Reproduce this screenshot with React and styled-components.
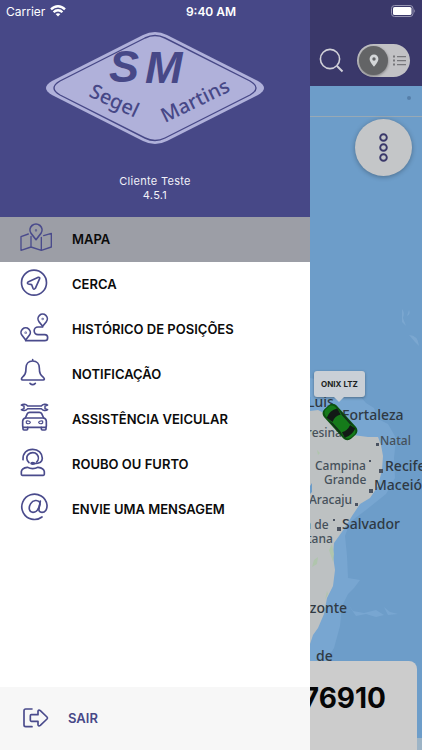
// src/App.jsx
import React, { useState } from "react";
import styled, { createGlobalStyle } from "styled-components";

const GlobalStyle = createGlobalStyle`
  * {
    box-sizing: border-box;
  }

  body {
    margin: 0;
    font-family: Inter, "Liberation Sans", sans-serif;
    background: #ffffff;
  }

  button {
    font: inherit;
    border: none;
    padding: 0;
    background: transparent;
    cursor: pointer;
  }
`;

const Screen = styled.div`
  position: relative;
  display: flex;
  min-height: 100vh;
  overflow: hidden;
`;

const StatusBar = styled.div`
  position: absolute;
  top: 0;
  left: 0;
  right: 0;
  z-index: 3;
  display: grid;
  grid-template-columns: 1fr auto 1fr;
  align-items: center;
  height: 22px;
  padding: 0 6px;
  color: #ffffff;
  font-size: 12px;
`;

const Carrier = styled.div`
  display: flex;
  align-items: center;
  gap: 5px;
`;

const Time = styled.div`
  font-weight: 600;
`;

const Battery = styled.svg`
  justify-self: end;
  width: 25px;
  height: 12px;
`;

const Drawer = styled.aside`
  position: relative;
  z-index: 2;
  display: flex;
  flex: 0 0 310px;
  flex-direction: column;
  background: #ffffff;
`;

const DrawerHeader = styled.header`
  display: flex;
  flex-direction: column;
  align-items: center;
  gap: 30px;
  padding: 32px 0 15px;
  background: #474887;
`;

const Logo = styled.svg`
  display: block;
  width: 218px;
  height: 112px;
`;

const Client = styled.div`
  color: #f1f1f8;
  font-size: 11px;
  line-height: 14px;
  letter-spacing: 0.3px;
  text-align: center;
`;

const Menu = styled.nav`
  display: flex;
  flex: 1;
  flex-direction: column;
`;

const MenuItem = styled.a`
  display: flex;
  align-items: center;
  gap: 20px;
  height: 45px;
  padding: 0 20px 2px;
  color: #0b0b0b;
  background: ${(props) => (props.$active ? "#9c9ea6" : "transparent")};
  font-size: 13px;
  font-weight: 600;
  text-decoration: none;
`;

const IconBox = styled.span`
  display: flex;
  padding-bottom: 2px;
`;

const LineIcon = styled.svg`
  display: block;
  width: 32px;
  height: 28px;
  fill: none;
  stroke: #4a4b8c;
  stroke-width: 5;
  stroke-linecap: round;
  stroke-linejoin: round;
  overflow: visible;
`;

const ExitButton = styled.button`
  && {
    display: flex;
    align-items: center;
    gap: 16px;
    height: 63px;
    padding: 0 20px 2px;
    color: #474887;
    background: #f7f7f7;
    font-size: 13px;
    font-weight: 600;
  }
`;

const Main = styled.main`
  display: flex;
  flex: 1;
  flex-direction: column;
  min-width: 0;
`;

const Toolbar = styled.div`
  display: flex;
  align-items: center;
  justify-content: space-between;
  height: 86px;
  padding: 34px 12px 0 9px;
  background: #3a386a;
`;

const SearchButton = styled.button`
  display: flex;
`;

const Toggle = styled.label`
  position: relative;
  display: grid;
  grid-template-columns: 1fr 1fr;
  align-items: center;
  width: 53px;
  height: 33px;
  padding: 2px;
  border-radius: 17px;
  background: #c2c2c5;
  cursor: pointer;
`;

const ToggleInput = styled.input`
  position: absolute;
  inset: 0;
  margin: 0;
  opacity: 0;
`;

const Knob = styled.span`
  display: flex;
  align-items: center;
  justify-content: center;
  width: 29px;
  height: 29px;
  border-radius: 50%;
  background: #636466;
  box-shadow: 0 1px 3px rgba(0, 0, 0, 0.4);
`;

const ListSide = styled.span`
  display: flex;
  justify-content: center;
  padding-left: 2px;
`;

const MapArea = styled.section`
  position: relative;
  display: flex;
  flex: 1;
  flex-direction: column;
  background: #6d9dc9;
  overflow: hidden;
`;

const MapCanvas = styled.svg`
  position: absolute;
  top: 0;
  left: 0;
  width: 100%;
  height: 100%;
`;

const Place = styled.span`
  position: absolute;
  left: ${(props) => props.$x}px;
  top: ${(props) => props.$y}px;
  color: ${(props) => (props.$big ? "#2f3943" : "#45505a")};
  font-family: "Noto Sans", "Open Sans", sans-serif;
  font-size: ${(props) => (props.$big ? 14 : 12)}px;
  font-weight: 500;
  line-height: 13px;
  white-space: nowrap;
`;

const Bubble = styled.div`
  position: absolute;
  left: 4px;
  top: 285px;
  width: 51px;
  padding: 8px 0;
  border-radius: 3px;
  color: #1c1f22;
  background: #c9cfd6;
  box-shadow: 0 1px 3px rgba(0, 0, 0, 0.35);
  font-size: 8px;
  font-weight: 700;
  line-height: 10px;
  text-align: center;

  &::after {
    content: "";
    position: absolute;
    left: 20px;
    top: 26px;
    border: 5px solid transparent;
    border-top-color: #c9cfd6;
    border-bottom: none;
  }
`;

const Car = styled.svg`
  position: absolute;
  left: 10px;
  top: 316px;
  width: 40px;
  height: 40px;
`;

const RoundButton = styled.button`
  && {
    position: relative;
    display: flex;
    align-items: center;
    justify-content: center;
    align-self: flex-end;
    width: 57px;
    height: 57px;
    margin: 33px 10px 0 0;
    border-radius: 50%;
    background: #c4c6c8;
    box-shadow: 0 1px 5px rgba(0, 0, 0, 0.3);
  }
`;

const VehicleCard = styled.div`
  position: relative;
  display: flex;
  justify-content: flex-end;
  height: 89px;
  margin: auto 5px 0 0;
  padding: 20px 31px 0 0;
  border-radius: 0 8px 0 0;
  background: #cccccc;
  color: #060606;
  font-size: 28px;
  font-weight: 700;
  line-height: 34px;
  white-space: nowrap;
`;

const icons = {
  map: (
    <>
      <path d="M48 47 L33 28 A18 18 0 1 1 63 28 Z" />
      <circle cx="48" cy="19" r="1" />
      <path d="M25 30 L3 38 V79 L33 69 L64 79 L94 69 V28 L71 35 M33 37 V69 M64 40 V79" strokeWidth="4" />
    </>
  ),
  fence: (
    <>
      <circle cx="42" cy="41" r="37.5" />
      <path d="M55 25 L24 39 Q20 43 25 45 L35 47 L39 58 Q42 63 46 58 L59 29 Q60 24 55 25 Z" />
    </>
  ),
  route: (
    <>
      <path d="M68 37 L57 23 A14 14 0 1 1 79 23 Z" />
      <circle cx="68" cy="15" r="1" />
      <path d="M17 78 L6 64 A14 14 0 1 1 28 64 Z" />
      <circle cx="17" cy="56" r="1" />
      <path d="M17 80 H74 A9 9 0 0 0 74 62 H54 A11 11 0 0 1 54 39 H68" />
    </>
  ),
  bell: (
    <>
      <path d="M38 2 V6 M38 6 C25 6 18 15 18 27 C18 45 14 48 6 56 Q2 62 8 63 H69 Q76 62 71 56 C62 48 58 45 58 27 C58 15 51 6 38 6 Z" />
      <path d="M30 73 Q38 81 46 73" />
    </>
  ),
  service: (
    <>
      <path
        d="M23 6 C19 0 9 -1 4 3 L12 6 V14 L4 17 C9 21 19 20 23 14 H64 C68 20 78 21 83 17 L75 14 V6 L83 3 C78 -1 68 0 64 6 Z"
        strokeWidth="4.5"
      />
      <path d="M16 42 L22 29 Q24 25 29 25 H58 Q63 25 65 29 L71 42" />
      <path d="M16 42 H71 Q79 44 79 52 V67 Q79 70 76 70 H11 Q8 70 8 67 V52 Q8 44 16 42 Z" />
      <path d="M9 70 V75 Q9 78 12 78 H20 Q23 78 23 75 V70 M64 70 V75 Q64 78 67 78 H75 Q78 78 78 75 V70" />
      <path d="M19 51 Q31 50 31 56 Q26 62 19 57 Z M68 51 Q56 50 56 56 Q61 62 68 57 Z" strokeWidth="3.5" />
    </>
  ),
  support: (
    <>
      <path d="M9 32 C8 12 20 1 38 1 C55 1 67 13 67 28 C67 38 57 44 42 44" />
      <path d="M27 41 C18 33 19 22 25 16 C32 9 45 9 51 16 C57 23 56 33 50 39" />
      <ellipse cx="38" cy="43" rx="5" ry="2.5" fill="#4a4b8c" />
      <path d="M4 76 V68 Q5 57 22 55 Q38 63 54 55 Q72 57 73 68 V76 Q73 79 70 79 H7 Q4 79 4 76 Z" />
    </>
  ),
  at: (
    <>
      <path d="M66 69 A38 38 0 1 1 81 33 C82 47 75 55 66 55 C58 55 56 50 57 44 L61 21" />
      <path d="M60 26 C54 16 39 18 32 29 C24 42 28 55 39 55 C50 55 57 44 60 30" />
    </>
  ),
  exit: (
    <>
      <path d="M36 15 H17 Q12 15 12 20 V63 Q12 68 17 68 H36" />
      <path d="M34 32 H54 V21 Q56 16 61 20 L81 39 Q84 42 81 45 L61 64 Q56 68 54 63 V52 H34 Q31 52 31 49 V35 Q31 32 34 32 Z" />
    </>
  ),
};

const Icon = ({ name }) => (
  <LineIcon viewBox="0 0 96 84" aria-hidden="true">
    {icons[name]}
  </LineIcon>
);

const menuItems = [
  { id: "mapa", label: "MAPA", icon: "map" },
  { id: "cerca", label: "CERCA", icon: "fence" },
  { id: "historico", label: "HISTÓRICO DE POSIÇÕES", icon: "route" },
  { id: "notificacao", label: "NOTIFICAÇÃO", icon: "bell" },
  { id: "assistencia", label: "ASSISTÊNCIA VEICULAR", icon: "service" },
  { id: "roubo", label: "ROUBO OU FURTO", icon: "support" },
  { id: "mensagem", label: "ENVIE UMA MENSAGEM", icon: "at" },
];

const places = [
  { name: "Luis", x: -3, y: 309, big: true },
  { name: "Fortaleza", x: 32, y: 322, big: true },
  { name: "Teresina", x: -16, y: 340 },
  { name: "Natal", x: 70, y: 348 },
  { name: "Campina", x: 5, y: 373 },
  { name: "Recife", x: 75, y: 373, big: true },
  { name: "Grande", x: 14, y: 387 },
  { name: "Maceió", x: 64, y: 392, big: true },
  { name: "Aracaju", x: -1, y: 407 },
  { name: "Feira de", x: -27, y: 432 },
  { name: "Salvador", x: 32, y: 431, big: true },
  { name: "Santana", x: -24, y: 446 },
  { name: "Horizonte", x: -29, y: 515, big: true },
  { name: "de", x: 6, y: 563, big: true },
];

const BrandLogo = () => (
  <Logo viewBox="0 0 218 112" role="img" aria-label="SM Segel Martins">
    <path
      d="M97 3 Q109 -3 121 3 L212 49 Q224 56 212 63 L121 109 Q109 115 97 109 L6 63 Q-6 56 6 49 Z"
      fill="#b0b1da"
    />
    <path
      d="M99 6 Q109 1 119 6 L204 49 Q216 56 204 63 L119 106 Q109 111 99 106 L14 63 Q2 56 14 49 Z"
      fill="none"
      stroke="#474887"
      strokeWidth="1.4"
    />
    <g fill="#474887">
      <g fontFamily='"Liberation Sans", sans-serif' fontSize="45" fontWeight="700" fontStyle="italic">
        <text x="63" y="50">S</text>
        <text x="99" y="51">M</text>
      </g>
      <g fontFamily='"Noto Sans", "Open Sans", sans-serif' fontSize="20" fontWeight="500">
        <text transform="translate(42 64) rotate(25)">Segel</text>
        <text transform="translate(119 91) rotate(-26)">Martins</text>
      </g>
    </g>
  </Logo>
);

const App = () => {
  const [active, setActive] = useState("mapa");

  return (
    <Screen>
      <GlobalStyle />
      <StatusBar>
        <Carrier>
          Carrier
          <svg width="16" height="12" viewBox="0 0 16 12" fill="none" stroke="#ffffff" strokeWidth="2.3">
            <path d="M1 4.4 C5 0.2 11 0.2 15 4.4" />
            <path d="M3.6 7.2 C6 4.6 10 4.6 12.4 7.2" />
            <path d="M8 11.5 L5.6 9.1 Q8 7.2 10.4 9.1 Z" fill="#ffffff" stroke="none" />
          </svg>
        </Carrier>
        <Time>9:40 AM</Time>
        <Battery viewBox="0 0 25 12">
          <rect x="0.5" y="0.5" width="21.5" height="11" rx="3" fill="none" stroke="#9796b3" />
          <rect x="2" y="2" width="18.5" height="8" rx="1.6" fill="#ffffff" />
          <path d="M23.2 4 Q25 6 23.2 8 Z" fill="#9796b3" />
        </Battery>
      </StatusBar>

      <Drawer>
        <DrawerHeader>
          <BrandLogo />
          <Client>
            <div>Cliente Teste</div>
            <div>4.5.1</div>
          </Client>
        </DrawerHeader>
        <Menu>
          {menuItems.map((item) => (
            <MenuItem
              key={item.id}
              href={`#${item.id}`}
              $active={active === item.id}
              onClick={() => setActive(item.id)}
            >
              <IconBox>
                <Icon name={item.icon} />
              </IconBox>
              {item.label}
            </MenuItem>
          ))}
        </Menu>
        <ExitButton type="button">
          <Icon name="exit" />
          SAIR
        </ExitButton>
      </Drawer>

      <Main>
        <Toolbar>
          <SearchButton type="button" aria-label="Buscar">
            <svg width="25" height="25" viewBox="0 0 25 25" fill="none" stroke="#d0d0d8" strokeWidth="1.6">
              <circle cx="11" cy="11" r="9.6" />
              <path d="M18 18 L23.5 23.5" strokeWidth="2" />
            </svg>
          </SearchButton>
          <Toggle>
            <ToggleInput type="checkbox" aria-label="Alternar entre mapa e lista" />
            <Knob>
              <svg width="10" height="13" viewBox="0 0 10 13">
                <path
                  d="M5 0.5 A4.4 4.4 0 0 0 0.6 4.9 C0.6 8 5 12.6 5 12.6 S9.4 8 9.4 4.9 A4.4 4.4 0 0 0 5 0.5 Z M5 3.3 A1.7 1.7 0 1 1 5 6.7 A1.7 1.7 0 1 1 5 3.3 Z"
                  fill="#d4d6d8"
                  fillRule="evenodd"
                />
              </svg>
            </Knob>
            <ListSide>
              <svg width="13" height="11" viewBox="0 0 13 11" fill="#77777b">
                <path d="M0 0.5 H2 V2.5 H0 Z M0 4.5 H2 V6.5 H0 Z M0 8.5 H2 V10.5 H0 Z" />
                <path d="M4 1 H13 V2.2 H4 Z M4 5 H13 V6.2 H4 Z M4 9 H13 V10.2 H4 Z" />
              </svg>
            </ListSide>
          </Toggle>
        </Toolbar>

        <MapArea>
          <MapCanvas viewBox="0 0 112 664" preserveAspectRatio="xMinYMin slice" aria-hidden="true">
            {/* shallow water */}
            <path
              d="M0 292 L20 296 L34 303 L50 310 L56 317 L64 322 L68 333 L78 338 L86 352 L84 372 L85 392 L76 408 L56 424 L40 436 L35 450 L37 470 L38 492 L50 494 L44 502 L38 508 L32 520 L30 540 L24 562 L14 578 L0 584 Z"
              fill="#78a6d1"
            />
            <path d="M37 517 L43 525 L54 527 L66 524 L74 529 L66 531 L56 528 L46 530 Z M74 521 L80 526 L88 528 L78 529 Z" fill="#78a6d1" />
            <path
              d="M92 223 Q95 226 93 232 L96 240 L92 236 Z M99 224 Q101 228 97 230 Z M99 249 Q108 249 109 260 L105 256 Z"
              fill="#7ba7d0"
            />
            {/* land */}
            <path
              d="M0 325 L8 324 L18 329 L32 339 L43 349 L58 351 L68 351 L71 359 L73 370 L72 384 L68 400 L60 412 L50 418 L42 430 L34 443 L24 457 L23 470 L25 484 L23 500 L17 512 L14 528 L8 542 L3 549 L0 558 Z"
              fill="#bdc1c2"
            />
            <path
              d="M22 458 L24 468 L23 476 L19 464 Z M4 474 L8 471 L7 478 L2 481 Z M7 364 L10 367 L8 369 Z M2 344 L5 347 L1 349 Z M15 514 L17 505 L18 508 Z"
              fill="#b0c5ad"
            />
            <path d="M0 400 L2 397 L2 406 L0 408 Z" fill="#6d9dc9" />
            <g fill="#4b5361">
              <rect x="66" y="357" width="3" height="3" />
              <rect x="59" y="374" width="2" height="2" />
              <rect x="69" y="383" width="4" height="4" />
              <rect x="59" y="403" width="4" height="4" />
              <rect x="45" y="417" width="3" height="3" />
              <rect x="23" y="433" width="2" height="2" />
              <rect x="27" y="441" width="4" height="4" />
            </g>
            <path d="M0 30.5 H112" stroke="#98a9b5" />
            <circle cx="99" cy="12" r="2" fill="#557fa9" />
            <path d="M105 652 H112 V664 H105 Z" fill="#9db4c6" />
          </MapCanvas>

          {places.map((place) => (
            <Place key={place.name} $x={place.x} $y={place.y} $big={place.big}>
              {place.name}
            </Place>
          ))}

          <Car viewBox="0 0 40 40" aria-hidden="true">
            <g transform="translate(20 20) rotate(-42)">
              <rect x="-8.5" y="-20" width="17" height="40" rx="5.5" fill="#0c5210" />
              <rect x="-6.5" y="-19" width="13" height="38" rx="5" fill="#157a1a" />
              <path d="M-7 -12 Q0 -16 7 -12 L5.5 -5 Q0 -8 -5.5 -5 Z" fill="#121a16" />
              <path d="M-5.5 9 Q0 11.5 5.5 9 L7 15 Q0 18 -7 15 Z" fill="#121a16" />
              <path d="M-7.5 -8 L-6 -4 V8 L-7.5 11 Z M7.5 -8 L6 -4 V8 L7.5 11 Z" fill="#12301a" />
            </g>
          </Car>
          <Bubble>ONIX LTZ</Bubble>

          <RoundButton type="button" aria-label="Mais opções">
            <svg width="9" height="29" viewBox="0 0 9 29" fill="none" stroke="#3a386a" strokeWidth="1.9">
              <circle cx="4.5" cy="4.5" r="3.3" />
              <circle cx="4.5" cy="14.5" r="3.3" />
              <circle cx="4.5" cy="24.5" r="3.3" />
            </svg>
          </RoundButton>

          <VehicleCard>76910</VehicleCard>
        </MapArea>
      </Main>
    </Screen>
  );
};

export default App;
